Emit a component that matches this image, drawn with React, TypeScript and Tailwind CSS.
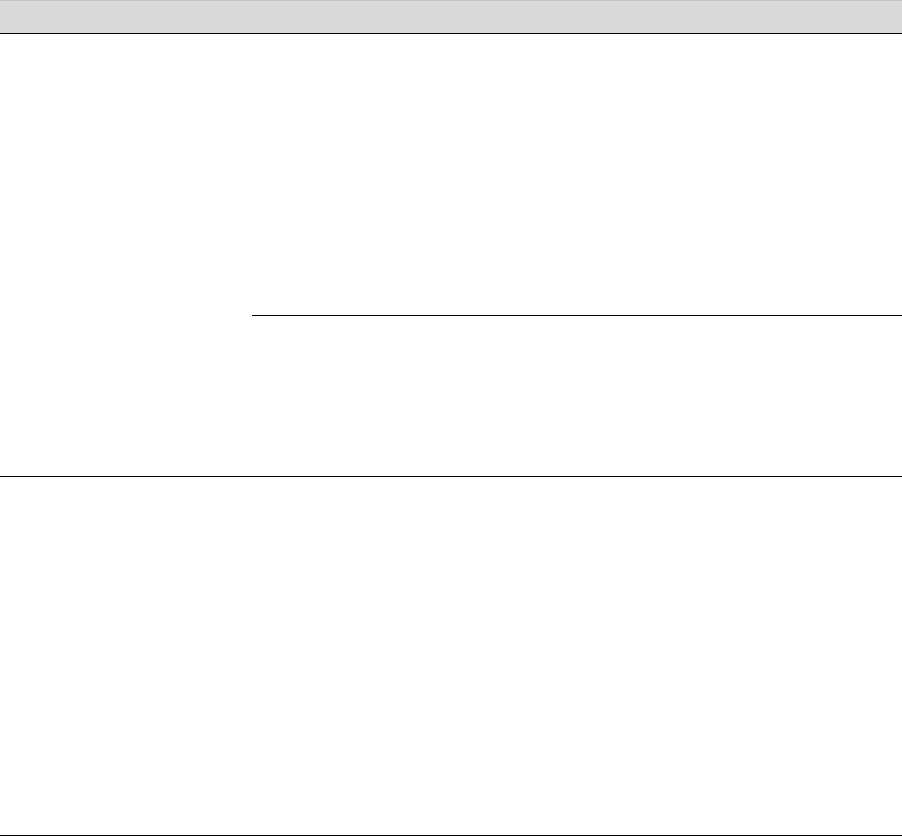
export default function App() {
  return (
    <div className="min-h-screen bg-white font-['Liberation_Sans',sans-serif]">
      <div className="w-full">
        {/* Header row */}
        <div className="h-[34px] bg-[#d9d9d9] border-t border-b border-t-[#c4c4c4] border-b-black" />

        {/* Row 1: left cell spans, right cell split in two */}
        <div className="grid grid-cols-[252px_1fr] h-[443px] border-b border-black">
          <div />
          <div className="flex flex-col">
            <div className="h-[282px] border-b border-black" />
            <div className="flex-1" />
          </div>
        </div>

        {/* Row 2 */}
        <div className="grid grid-cols-[252px_1fr] h-[359px] border-b border-black">
          <div />
          <div />
        </div>
      </div>
    </div>
  )
}
